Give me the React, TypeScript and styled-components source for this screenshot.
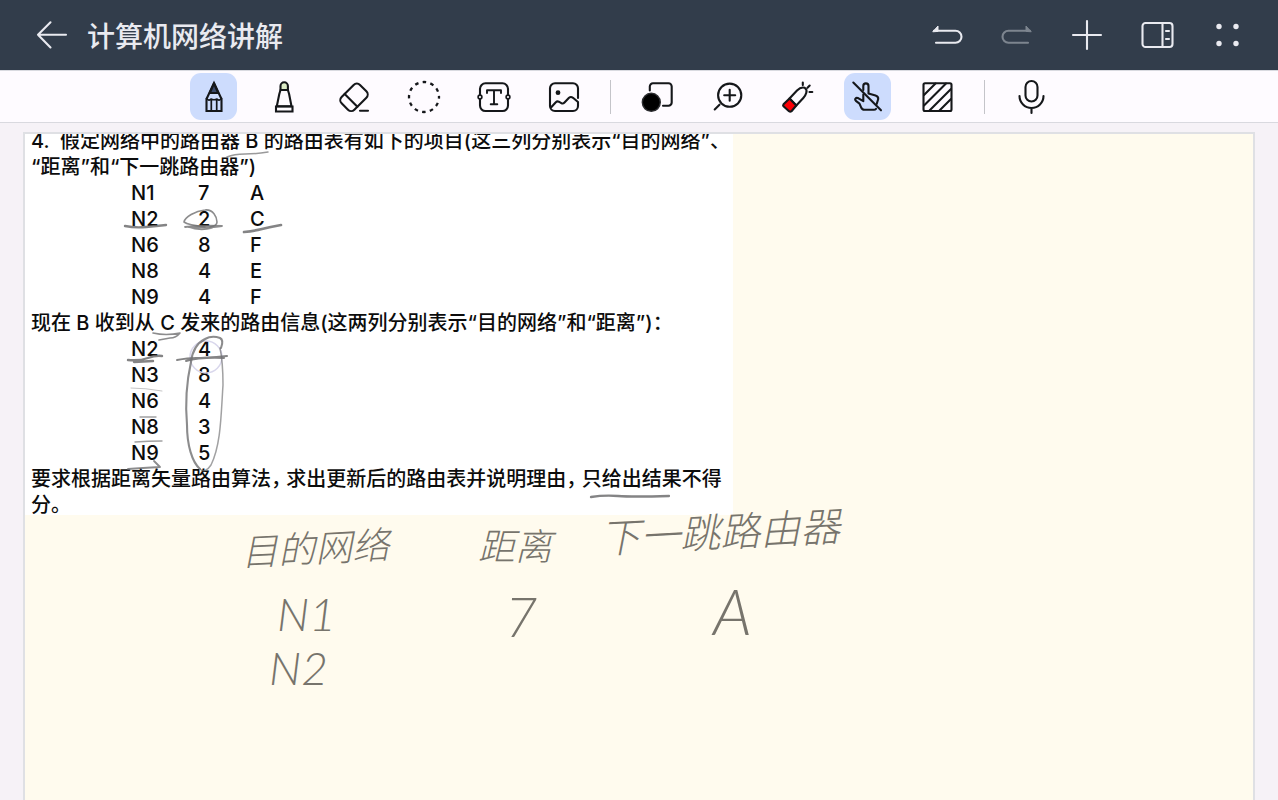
import React from 'react';
import styled, { createGlobalStyle } from 'styled-components';

const GlobalStyle = createGlobalStyle`
  * { box-sizing: border-box; }
  body {
    margin: 0;
    background: #f6f2f7;
    font-family: Inter, "Noto Sans CJK SC", sans-serif;
  }
`;

const Shell = styled.div`
  display: flex;
  flex-direction: column;
  height: 100vh;
  overflow: hidden;
`;

const Header = styled.header`
  display: flex;
  align-items: center;
  flex: none;
  height: 70px;
  padding: 0 28px;
  background: #323d4b;
  color: #e9eaf0;
`;

const Title = styled.h1`
  flex: 1;
  margin: 0 0 0 13px;
  padding-top: 3px;
  font-size: 28px;
  font-weight: 500;
  line-height: 40px;
`;

const HeaderActions = styled.div`
  display: flex;
  gap: 24px;
`;

const IconButton = styled.button<{ $size?: number; $active?: boolean }>`
  display: flex;
  align-items: center;
  justify-content: center;
  flex: none;
  width: ${(p) => p.$size ?? 46}px;
  height: ${(p) => p.$size ?? 46}px;
  padding: 0;
  border: 0;
  border-radius: 11px;
  background: ${(p) => (p.$active ? '#cddcfd' : 'transparent')};
  color: inherit;

  &:disabled { color: #7d858f; }
`;

const Glyph = styled.svg`
  display: block;
  width: 32px;
  height: 32px;
  overflow: visible;
  fill: none;
  stroke: currentColor;
  stroke-width: 2.1;
  stroke-linecap: round;
  stroke-linejoin: round;
`;

const Toolbar = styled.div`
  display: flex;
  align-items: center;
  justify-content: center;
  gap: 23px;
  flex: none;
  height: 53px;
  padding-right: 33px;
  border-top: 1px solid #d9dae0;
  border-bottom: 1px solid #d9d9df;
  background: #fefbff;
  color: #15171a;
`;

const Separator = styled.span`
  width: 1px;
  height: 34px;
  background: #c4c4c9;
`;

const Workspace = styled.main`
  display: flex;
  flex: 1;
  min-height: 0;
  padding: 9px 23px 0;
`;

const Paper = styled.section`
  position: relative;
  flex: 1;
  border: 2px solid #dfe0e4;
  border-bottom: 0;
  background: #fffbee;
  overflow: hidden;
`;

const Clipping = styled.article`
  display: flow-root;
  width: 708px;
  height: 381px;
  padding-left: 6px;
  background: #fff;
  color: #0c0c0c;
  font-size: 20px;
  font-weight: 500;
  line-height: 26px;
  font-feature-settings: "halt";
`;

const Paragraph = styled.p<{ $first?: boolean }>`
  margin: ${(p) => (p.$first ? '-6px' : '0')} 0 0;
  white-space: pre;
`;

const RouteTable = styled.table`
  margin-left: 100px;
  border-collapse: collapse;

  td {
    width: 52px;
    height: 26px;
    padding: 0;
  }
  td:first-child { width: 67px; }
`;

const InkLayer = styled.svg`
  position: absolute;
  top: 0;
  left: 0;
  width: 900px;
  height: 600px;
  fill: none;
  stroke: #6f6f70;
  stroke-linecap: round;
  stroke-linejoin: round;
  pointer-events: none;
`;

const Note = styled.span<{ $x: number; $y: number; $size: number; $tilt?: number }>`
  position: absolute;
  left: ${(p) => p.$x}px;
  top: ${(p) => p.$y}px;
  color: #77746c;
  font-family: Lato, "Noto Sans CJK SC", sans-serif;
  font-size: ${(p) => p.$size}px;
  font-style: italic;
  font-weight: 300;
  line-height: 52px;
  white-space: nowrap;
  transform: rotate(${(p) => p.$tilt ?? 0}deg);
`;

const icons = {
  back: <path d="M31 15.700H3M15.500 3.300L3 15.700 15.500 28.500" />,
  undo: (
    <>
      <path d="M3 11.700H24.500a6 6 0 0 1 0 12H5" />
      <path d="M2 12.500L7 7v5z" fill="currentColor" strokeWidth="1" />
    </>
  ),
  redo: (
    <>
      <path d="M29 11.700H7.500a6 6 0 0 0 0 12H27" />
      <path d="M30 12.500L25 7v5z" fill="currentColor" strokeWidth="1" />
    </>
  ),
  add: <path d="M16 2v28M2 16h28" />,
  panel: (
    <>
      <rect x="1.500" y="4" width="30" height="24" rx="3" />
      <path d="M21.500 4v24M25 12h3M25 20h3" />
    </>
  ),
  more: (
    <g fill="currentColor" stroke="none">
      <circle cx="8" cy="7.500" r="2.700" />
      <circle cx="25" cy="7.500" r="2.700" />
      <circle cx="8" cy="24.500" r="2.700" />
      <circle cx="25" cy="24.500" r="2.700" />
    </g>
  ),
  pencil: (
    <>
      <path d="M8.500 30V18L16 2 23.500 18V30Z" strokeLinejoin="miter" />
      <path d="M16 2.500L11.800 12h8.400z" fill="#39496a" />
      <path d="M8.500 17.500q2.500 3 4.500.5 3 1.500 6 0 2 2.500 4.500-.5M13.300 19v11M18.700 19v11" strokeWidth="1.700" />
    </>
  ),
  marker: (
    <>
      <path d="M12.500 9V5a3.700 3.700 0 0 1 7.400 0v4z" fill="#dcecc6" />
      <path d="M12.500 9L11.300 13 8.800 25.300H23.500L21.100 13 19.900 9z" />
      <path d="M8 25.500h16.500v5H8z" strokeLinejoin="miter" />
    </>
  ),
  eraser: (
    <>
      <g transform="rotate(-45 16 16.300)">
        <rect x="3" y="7.300" width="26" height="18" rx="4.500" />
        <path d="M11.800 7.300v18" />
      </g>
      <path d="M22 29.800h8" />
    </>
  ),
  lasso: <circle cx="16" cy="16" r="15" strokeWidth="2.300" strokeLinecap="butt" strokeDasharray="3.600 4.250" strokeDashoffset="1.800" />,
  text: (
    <>
      <rect x="2" y="2.300" width="28" height="27.700" rx="5.500" />
      <path d="M9 12V9.300h14V12M16 9.300v14M12.700 23.300h6.600" strokeWidth="1.900" />
      <circle cx="2" cy="16" r="1.900" fill="#fefbff" strokeWidth="1.600" />
      <circle cx="30" cy="16" r="1.900" fill="#fefbff" strokeWidth="1.600" />
    </>
  ),
  image: (
    <>
      <path d="M30 17V7.300a5 5 0 0 0-5-5H7a5 5 0 0 0-5 5V25a5 5 0 0 0 5 5h18a5 5 0 0 0 5-5v-4l-5-4.200q-2.200-1.600-4 0l-4.500 4.700q-1.500 1.600-3.200.6l-2.500-1.400q-1.600-.8-3 .5L3 26.500" />
      <circle cx="10" cy="11.700" r="2.400" fill="currentColor" stroke="none" />
    </>
  ),
  color: (
    <>
      <path d="M7.800 9.500V5.500a3.200 3.200 0 0 1 3.200-3.200H26.500a3.200 3.200 0 0 1 3.200 3.200v16a3.200 3.200 0 0 1-3.200 3.200h-5.500" />
      <circle cx="9.300" cy="21.300" r="9" fill="#000" stroke="#2c2d30" strokeWidth="1.400" />
    </>
  ),
  zoom: (
    <>
      <circle cx="17.700" cy="14.200" r="11.600" />
      <path d="M17.700 8.700v11M12.200 14.200h11M7.500 23.700L2.700 28.500" />
    </>
  ),
  laser: (
    <>
      <path d="M7.500 17.500L15 9.500Q19 5.500 22.700 6.800q2.600 1.500 1.600 5-.7 2.700-3 5.200L14.300 24.500z" />
      <path d="M7.500 17.500L1.500 23.300q-.8 1 0 2L7 30.200q1.300 1 2.500 0l4.800-5.700z" fill="#fb0007" />
      <path d="M20.800 1.500v2.600M27.700 4.500L25.500 6.800M30.300 11h-2.800" />
    </>
  ),
  touch: (
    <>
      <path d="M11.300 9V5a2.600 2.600 0 0 1 5.200 0v7.500l7 2q3 .9 2.700 3.500l-1.500 5M11.300 13.500v6.700L6.500 17.300q-2-1-3.200.5-.6 1.200.6 2L7.500 22.600l1.500 3.500q1 2.700 3.500 2.700h9.500q1.200 0 2-1" />
      <path d="M1.300 1.500L29 29.300" />
    </>
  ),
  hatch: (
    <>
      <rect x="1.500" y="2.300" width="28" height="27.700" rx="1.500" />
      <path d="M2 14L13.500 2.500M2 24.500L24 2.500M7.500 29.500L29 8M17.500 29.500L29 18" />
    </>
  ),
  mic: (
    <>
      <rect x="9.500" y="0" width="12" height="20.500" rx="6" />
      <path d="M3.500 15a12 12 0 0 0 24 0M15.500 27v5" />
    </>
  ),
};

type IconName = keyof typeof icons;
type Tool = { icon: IconName; label: string; active?: boolean };

const toolGroups: Tool[][] = [
  [
    { icon: 'pencil', label: '铅笔', active: true },
    { icon: 'marker', label: '荧光笔' },
    { icon: 'eraser', label: '橡皮擦' },
    { icon: 'lasso', label: '套索' },
    { icon: 'text', label: '文本' },
    { icon: 'image', label: '图片' },
  ],
  [
    { icon: 'color', label: '颜色' },
    { icon: 'zoom', label: '缩放' },
    { icon: 'laser', label: '激光笔' },
    { icon: 'touch', label: '禁用手指书写', active: true },
    { icon: 'hatch', label: '遮挡' },
  ],
  [{ icon: 'mic', label: '录音' }],
];

const headerActions: (Tool & { disabled?: boolean })[] = [
  { icon: 'undo', label: '撤销' },
  { icon: 'redo', label: '重做', disabled: true },
  { icon: 'add', label: '添加' },
  { icon: 'panel', label: '侧栏' },
  { icon: 'more', label: '更多' },
];

const tableB = [
  ['N1', '7', 'A'],
  ['N2', '2', 'C'],
  ['N6', '8', 'F'],
  ['N8', '4', 'E'],
  ['N9', '4', 'F'],
];

const tableC = [
  ['N2', '4'],
  ['N3', '8'],
  ['N6', '4'],
  ['N8', '3'],
  ['N9', '5'],
];

/* Pencil underlines and loops drawn over the exercise: [path, width, opacity] */
const marks: [string, number, number][] = [
  ['M227 157Q234 154 245 154T268 152', 1.5, 0.7],
  ['M125 226Q135 228 146 227T166 225', 2.4, 0.85],
  ['M205 227Q188 225 184 222C185 217 195 211 205 210C213 209 217 217 217 222Q217 226 210 227', 1.6, 0.8],
  ['M185 227Q202 225 222 226Q212 228 188 227Q200 231 212 228', 1.8, 0.8],
  ['M244 232Q254 231 262 229T281 225', 2.6, 0.85],
  ['M153 333Q166 336 180 333Q176 338 170 338L159 340', 1.6, 0.8],
  ['M128 360Q140 361 148 358T162 356M134 362L153 361', 2.4, 0.85],
  ['M177 360Q188 358 196 358T227 356M186 361Q200 357 224 358', 2, 0.85],
  ['M221 348Q224 340 220 338Q212 335 205 339Q193 345 191 362C187 380 185 402 187 425C187 445 192 462 200 469', 2.1, 0.8],
  ['M200 469Q205 474 211 465C221 445 221 415 223 385Q223 362 220 348', 1.5, 0.65],
  ['M131 388Q145 388 162 391', 1, 0.4],
  ['M140 417L156 417', 1.4, 0.65],
  ['M135 442Q148 441 162 441', 1.4, 0.65],
  ['M128 469Q142 468 160 467L154 461', 1.8, 0.8],
  ['M591 497Q604 495 618 496T669 496', 2.3, 0.85],
];

function Icon({ name }: { name: IconName }) {
  return <Glyph viewBox="0 0 32 32" aria-hidden="true">{icons[name]}</Glyph>;
}

function Routes({ rows }: { rows: string[][] }) {
  return (
    <RouteTable>
      <tbody>
        {rows.map((row) => (
          <tr key={row[0]}>
            {row.map((cell, i) => <td key={i}>{cell}</td>)}
          </tr>
        ))}
      </tbody>
    </RouteTable>
  );
}

export default function App() {
  return (
    <Shell>
      <GlobalStyle />
      <Header>
        <IconButton type="button" aria-label="返回"><Icon name="back" /></IconButton>
        <Title>计算机网络讲解</Title>
        <HeaderActions>
          {headerActions.map((a) => (
            <IconButton key={a.icon} type="button" aria-label={a.label} disabled={a.disabled}>
              <Icon name={a.icon} />
            </IconButton>
          ))}
        </HeaderActions>
      </Header>
      <Toolbar role="toolbar" aria-label="书写工具">
        {toolGroups.map((group, g) => (
          <React.Fragment key={g}>
            {g > 0 && <Separator />}
            {group.map((t) => (
              <IconButton key={t.icon} type="button" $size={47} $active={t.active} aria-label={t.label}>
                <Icon name={t.icon} />
              </IconButton>
            ))}
          </React.Fragment>
        ))}
      </Toolbar>
      <Workspace>
        <Paper>
          <Clipping>
            <Paragraph $first>{'4.  假定网络中的路由器 B 的路由表有如下的项目(这三列分别表示“目的网络”、\n“距离”和“下一跳路由器”)'}</Paragraph>
            <Routes rows={tableB} />
            <Paragraph>{'现在 B 收到从 C 发来的路由信息(这两列分别表示“目的网络”和“距离”)：'}</Paragraph>
            <Routes rows={tableC} />
            <Paragraph>{'要求根据距离矢量路由算法， 求出更新后的路由表并说明理由， 只给出结果不得\n分。'}</Paragraph>
          </Clipping>
          <InkLayer viewBox="25 134 900 600" aria-hidden="true">
            <circle cx="206" cy="357" r="16" stroke="#d9d7ec" strokeWidth="1.500" />
            {marks.map(([d, w, o]) => <path key={d} d={d} strokeWidth={w} opacity={o} />)}
          </InkLayer>
          <Note $x={216} $y={388} $size={37} $tilt={-3}>目的网络</Note>
          <Note $x={453} $y={386} $size={37}>距离</Note>
          <Note $x={575} $y={372} $size={40} $tilt={-3}>下一跳路由器</Note>
          <Note $x={252} $y={454} $size={46}>N1</Note>
          <Note $x={480} $y={456} $size={56}>7</Note>
          <Note $x={688} $y={451} $size={64}>A</Note>
          <Note $x={244} $y={508} $size={46}>N2</Note>
        </Paper>
      </Workspace>
    </Shell>
  );
}
